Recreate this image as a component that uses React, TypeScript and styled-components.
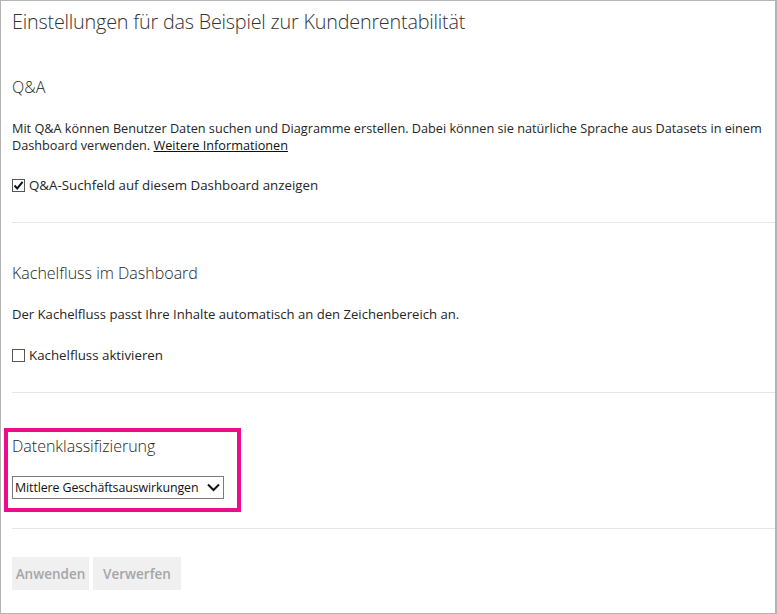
import styled, { createGlobalStyle } from "styled-components";

const GlobalStyle = createGlobalStyle`
    html, body {
        margin: 0;
        padding: 0;
        background: #ffffff;
    }
    body {
        font-family: "Open Sans", "Noto Sans", "Liberation Sans", sans-serif;
        color: #252525;
    }
`;

const Frame = styled.div`
    box-sizing: border-box;
    width: 777px;
    height: 614px;
    border-left: 1px solid #b4b4b4;
    border-top: 1px solid #b4b4b4;
    border-right: 2px solid #b4b4b4;
    border-bottom: 1px solid #b4b4b4;
    padding-left: 11px;
    display: flex;
    flex-direction: column;
    overflow: hidden;
`;

const Title = styled.h1`
    margin: 7px 0 0;
    font-size: 19.8px;
    line-height: 28px;
    font-weight: 300;
    color: #333333;
    letter-spacing: -0.2px;
`;

const SectionTitle = styled.h2<{ $top: number }>`
    margin: ${({ $top }) => $top}px 0 0;
    font-size: 16px;
    line-height: 24px;
    font-weight: 300;
    color: #252525;
`;

const Text = styled.p<{ $size: number }>`
    margin: 21px 0 0;
    font-size: ${({ $size }) => $size}px;
    line-height: 17px;
    color: #252525;
    white-space: nowrap;
`;

const Link = styled.a`
    color: #111111;
    text-decoration: underline;
    cursor: pointer;
`;

const CheckRow = styled.label<{ $top: number }>`
    margin-top: ${({ $top }) => $top}px;
    display: flex;
    align-items: center;
    gap: 4px;
    height: 20px;
    font-size: 13.3px;
    color: #252525;
`;

const Box = styled.span`
    box-sizing: border-box;
    width: 13px;
    height: 13px;
    border: 1px solid #555555;
    display: inline-flex;
    align-items: center;
    justify-content: center;
    background: #ffffff;
`;

const Divider = styled.hr<{ $top: number }>`
    margin: ${({ $top }) => $top}px 0 0;
    border: none;
    border-top: 1px solid #e6e6e6;
    height: 0;
`;

const Highlight = styled.div`
    box-sizing: border-box;
    margin: 35px 0 0 -8px;
    width: 237px;
    border: 4px solid #ec0c8c;
    padding: 2px 0 9px 4px;
`;

const Dropdown = styled.div`
    box-sizing: border-box;
    margin-top: 18px;
    width: 212px;
    height: 23px;
    border: 1px solid #7a7a7a;
    display: flex;
    align-items: center;
    justify-content: space-between;
    gap: 3px;
    padding: 0 3px 0 2px;
    font-size: 12.4px;
    letter-spacing: -0.1px;
    color: #111111;
    white-space: nowrap;

    svg {
        flex-shrink: 0;
    }
`;

const ButtonRow = styled.div`
    margin-top: 28px;
    display: flex;
    gap: 4px;
`;

const Button = styled.button<{ $width: number }>`
    width: ${({ $width }) => $width}px;
    height: 33px;
    padding: 0;
    border: none;
    background: #f0f0f0;
    color: #a6a6a6;
    font-family: inherit;
    font-size: 13.5px;
    font-weight: 600;
`;

function Check({ checked }: { checked: boolean }) {
    return (
        <Box>
            {checked && (
                <svg width="11" height="11" viewBox="0 0 11 11">
                    <path d="M1.5 5.5 L4.2 8.4 L9.6 1.8" fill="none" stroke="#111" strokeWidth="2" />
                </svg>
            )}
        </Box>
    );
}

export default function App() {
    return (
        <>
            <GlobalStyle />
            <Frame>
                <Title>Einstellungen für das Beispiel zur Kundenrentabilität</Title>

                <SectionTitle $top={39}>Q&amp;A</SectionTitle>
                <Text $size={12.7}>
                    Mit Q&amp;A können Benutzer Daten suchen und Diagramme erstellen. Dabei können sie natürliche Sprache aus Datasets in einem
                    <br />
                    Dashboard verwenden. <Link>Weitere Informationen</Link>
                </Text>
                <CheckRow $top={21}>
                    <Check checked />
                    Q&amp;A-Suchfeld auf diesem Dashboard anzeigen
                </CheckRow>
                <Divider $top={27} />

                <SectionTitle $top={38}>Kachelfluss im Dashboard</SectionTitle>
                <Text $size={13.1}>Der Kachelfluss passt Ihre Inhalte automatisch an den Zeichenbereich an.</Text>
                <CheckRow $top={22}>
                    <Check checked={false} />
                    Kachelfluss aktivieren
                </CheckRow>
                <Divider $top={27} />

                <Highlight>
                    <SectionTitle $top={0}>Datenklassifizierung</SectionTitle>
                    <Dropdown>
                        Mittlere Geschäftsauswirkungen
                        <svg width="13" height="9" viewBox="0 0 13 9">
                            <path d="M1 1.5 L6.5 7 L12 1.5" fill="none" stroke="#111" strokeWidth="2" />
                        </svg>
                    </Dropdown>
                </Highlight>
                <Divider $top={16} />

                <ButtonRow>
                    <Button $width={77}>Anwenden</Button>
                    <Button $width={88}>Verwerfen</Button>
                </ButtonRow>
            </Frame>
        </>
    );
}
